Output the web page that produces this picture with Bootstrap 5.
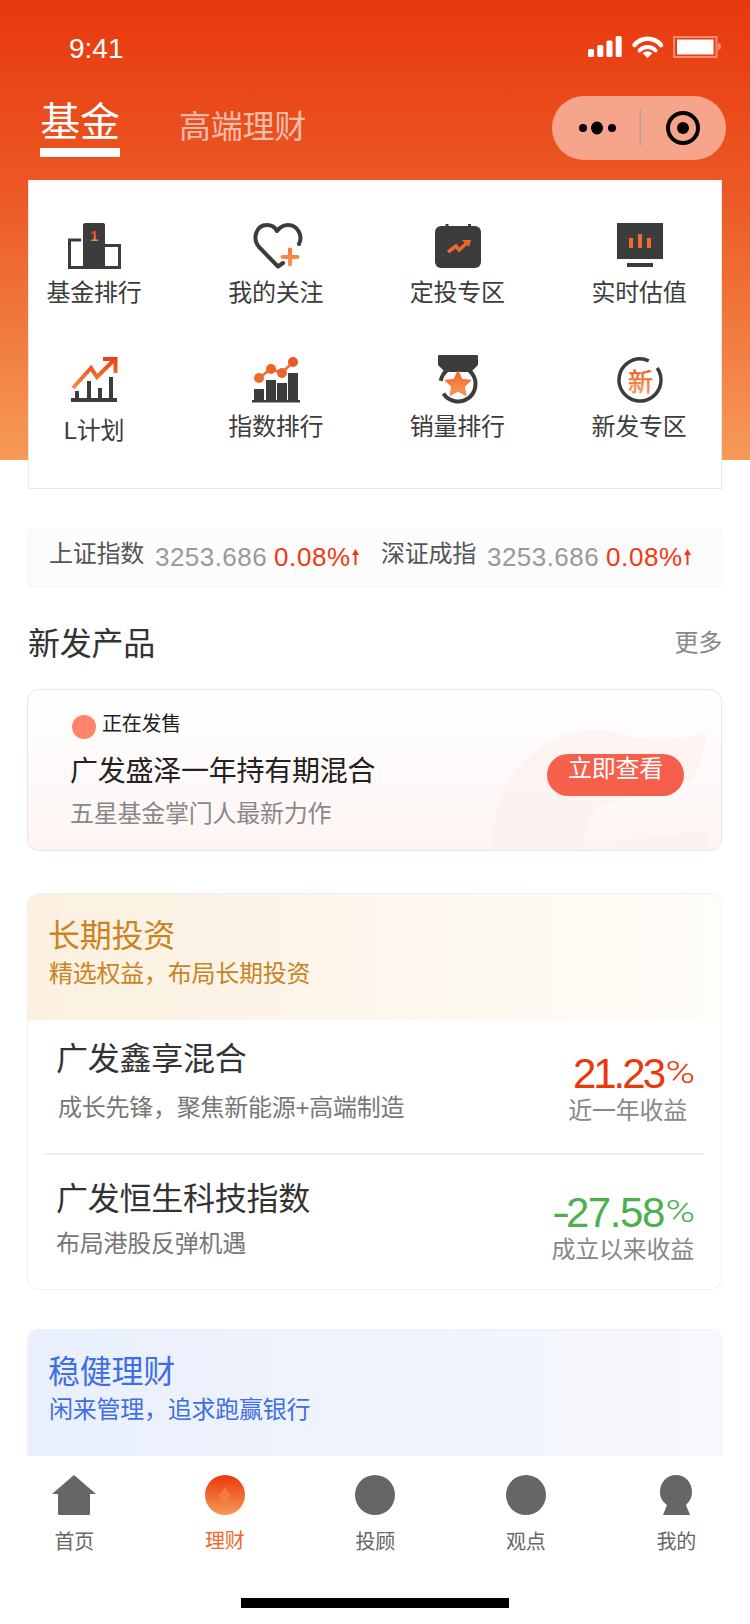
<!DOCTYPE html>
<html lang="zh-CN">
<head>
<meta charset="utf-8">
<title>基金</title>
<link rel="stylesheet" href="https://cdn.jsdelivr.net/npm/bootstrap@5.3.0/dist/css/bootstrap.min.css">
<style>
html,body{margin:0;background:#fff}
body{width:750px;height:1624px;overflow:hidden;font-family:"Liberation Sans","Noto Sans CJK SC",sans-serif;color:#333;letter-spacing:-.25px}
.zone-top{background:linear-gradient(180deg,#e8380d 0,#ec5a26 200px,#f69a58 460px) top/100% 460px no-repeat}
.status-row{height:96px;padding:33px 28px 0 69px;color:#fff}
.clock{font-size:28px;line-height:32px;font-family:"Liberation Sans",sans-serif;letter-spacing:0}
.nav-row{height:84px;padding:0 24px 0 40px}
.tab-on{width:80px;font-size:40px;line-height:52px;color:#fff;border-bottom:9px solid #fff;height:61px;text-align:center;white-space:nowrap}
.tab-off{font-size:32px;line-height:40px;color:rgba(255,255,255,.65);margin:11px 0 0 59px}
.capsule{width:174px;height:64px;border-radius:32px;background:#f6a58b}
.tool-box{width:694px;height:309px;margin:0 0 0 28px;background:#fff;border:1px solid #e9e9e9;border-top:0;padding:40px 16px 0 0}
.tool-item{width:132px;margin-left:-1px;text-align:center;font-size:24px;line-height:34px;color:#3c3c3c;white-space:nowrap}
.tool-item svg{display:block;margin:0 auto}
.tool-line+.tool-line{margin-top:40px}
.lift{margin-top:-4px}
.drop{margin-top:4px}
.index-bar{width:694px;height:58px;margin:40px 0 0 28px;background:#fcfcfc;border:1px solid #f5f5f5;padding-left:20px;white-space:nowrap}
.index-unit{width:332px;flex:none}
.index-name{font-size:24px;line-height:44px;color:#555;width:96px;margin-top:2px}
.index-num{font-size:26px;line-height:44px;color:#999;margin:5px 0 0 10px;letter-spacing:.45px}
.index-pct{font-size:26px;line-height:44px;color:#ee3a12;margin:5px 0 0 7px;letter-spacing:.6px}
.index-arrow{margin:19px 0 0 1px;display:block}
.sect-head{margin:36px 28px 0;height:42px}
.sect-name{font-size:32px;line-height:42px;color:#333}
.sect-more{font-size:24px;line-height:40px;color:#888}
.sale-box{position:relative;overflow:hidden;width:695px;height:162px;margin:24px 0 0 27px;border:1px solid #e6e6e6;border-radius:12px;background:linear-gradient(180deg,#fff,#fdf5f3);padding:22px 37px 0 42px}
.leaf-mark{position:absolute;left:452px;top:10px}
.sale-flag{font-size:20px;line-height:24px;color:#222}
.sale-dot{width:24px;height:24px;border-radius:50%;background:#ff8469;margin:3px 6px 0 2px}
.sale-name{font-size:28px;line-height:40px;margin-top:13px;color:#222}
.sale-note{font-size:24px;line-height:36px;margin-top:4px;color:#888}
.sale-btn{position:relative;width:137px;height:42px;margin-top:42px;border-radius:21px;background:#f55f4c;color:#fff;font-size:24px;line-height:30px;text-align:center}
.group-box{width:695px;margin-left:27px;border:1px solid #f0f0f0;border-radius:12px;overflow:hidden}
.long-box{height:397px;margin-top:42px}
.group-head{height:127px;padding:20px 20px 0 20px}
.long-box .group-head{height:126px}
.head-gold{background:linear-gradient(90deg,#fbf0e0,#fffdf9);color:#c9841f}
.head-blue{background:linear-gradient(90deg,#e9effd,#f7f8fc);color:#3f6fe3}
.group-title{font-size:32px;line-height:44px}
.group-sub{font-size:24px;line-height:32px;margin-left:1px}
.fund-row{height:133px;margin:0 17px;padding:0 9px 0 11px}
.fund-row+.fund-row{border-top:2px solid #eee;height:134px}
.fund-name{font-size:32px;line-height:44px;color:#333;margin-top:17px}
.fund-note{font-size:24px;line-height:36px;color:#777;margin-top:9px}
.note-in{margin-left:2px}
.fund-row+.fund-row .fund-name{margin-top:22px}
.fund-row+.fund-row .fund-note{margin-top:5px}
.fund-val{font-size:42px;line-height:44px;letter-spacing:-3px;font-family:"Liberation Sans",sans-serif;margin-top:32px;white-space:nowrap}
.fund-row+.fund-row .fund-val{margin-top:36px;letter-spacing:-1.4px}
.fund-unit{display:inline-block;width:28px;margin-left:4px;text-align:right;font-family:Roboto,"Liberation Sans",sans-serif;font-weight:300;font-size:32px;letter-spacing:0;transform:translateY(-5px) scaleX(1.25);transform-origin:100% 50%}
.fund-row+.fund-row .fund-unit{letter-spacing:0;margin-left:3px}
.minus-box{display:inline-block;width:20px;letter-spacing:0}
.fund-row+.fund-row .minus-box{letter-spacing:0}
.minus-sign{display:inline-block;transform:scaleX(1.3);transform-origin:0 50%}
.fund-cap{font-size:24px;line-height:34px;color:#888;margin-top:-5px;white-space:nowrap}
.cap-in{margin-right:8px}
.cap-edge{margin-right:1px}
.tone-up{color:#e8380d}
.tone-down{color:#4caf50}
.blue-box{height:127px;margin-top:39px;border-bottom:0;border-radius:12px 12px 0 0}
.tab-bar{height:168px;background:#fff;padding-top:19px}
.tab-line{margin-left:-1px}
.tab-cell{text-align:center;font-size:20px;line-height:28px;color:#666;width:150.5px;flex:none;text-indent:-2px}
.tab-cell svg{display:block;margin:0 auto 13px}
.tab-live{color:#f0682c}
.tab-live .tab-word{position:relative;top:-1px}
.home-line{width:268px;height:10px;background:#000;margin:42px auto 0}
</style>
</head>
<body>
<svg width="0" height="0" class="position-absolute">
<defs>
<linearGradient id="ember" x1="0" y1="0" x2="0" y2="1"><stop offset="0" stop-color="#e8380d"/><stop offset="1" stop-color="#f79a56"/></linearGradient>
<linearGradient id="emberFlat" gradientUnits="userSpaceOnUse" x1="0" y1="8" x2="0" y2="40"><stop offset="0" stop-color="#e8400f"/><stop offset="1" stop-color="#f78f4e"/></linearGradient>
<linearGradient id="emberOne" gradientUnits="userSpaceOnUse" x1="0" y1="10" x2="0" y2="22"><stop offset="0" stop-color="#e8400f"/><stop offset="1" stop-color="#f78f4e"/></linearGradient>
</defs>
</svg>

<div class="zone-top">
  <div class="status-row d-flex justify-content-between">
    <div class="clock">9:41</div>
    <svg width="135" height="27" viewBox="587 33 135 27">
      <g fill="#fff">
        <rect x="588" y="49" width="6" height="8" rx="1.500"/><rect x="597.300" y="45" width="6" height="12" rx="1.500"/><rect x="606.500" y="40.500" width="6" height="16.500" rx="1.500"/><rect x="615.700" y="36" width="6" height="21" rx="1.500"/>
        <path d="M647.500 58 642.500 53Q647.500 49.500 652.500 53Z"/>
      </g>
      <path d="M634.500 45A17 17 0 0 1 661 45" fill="none" stroke="#fff" stroke-width="4.500" stroke-linecap="round"/>
      <path d="M639.500 50.500A11 11 0 0 1 655.500 50.500" fill="none" stroke="#fff" stroke-width="4" stroke-linecap="round"/>
      <rect x="674" y="37" width="42.500" height="20" fill="none" stroke="#fff" stroke-opacity=".4" stroke-width="2"/>
      <rect x="677" y="39.500" width="36.500" height="15" fill="#fff"/>
      <path d="M718 43a3 3.500 0 0 1 0 7Z" fill="#fff" fill-opacity=".4"/>
    </svg>
  </div>

  <div class="nav-row d-flex align-items-start">
    <div class="tab-on">基金</div>
    <div class="tab-off">高端理财</div>
    <div class="capsule ms-auto">
      <svg width="174" height="64" viewBox="0 0 174 64">
        <circle cx="31" cy="32" r="4"/><ellipse cx="45" cy="32" rx="6" ry="6.500"/><circle cx="60" cy="32" r="4"/>
        <rect x="87.500" y="13" width="1.500" height="37" fill="#b3a197"/>
        <circle cx="131" cy="32" r="15" fill="none" stroke="#000" stroke-width="4"/><circle cx="131" cy="32" r="6"/>
      </svg>
    </div>
  </div>

  <div class="tool-box">
    <div class="tool-line d-flex justify-content-between">
      <div class="tool-item">
        <svg width="60" height="60" viewBox="0 0 60 60">
          <path d="M19 5a2 2 0 0 1 2-2h18a2 2 0 0 1 2 2v44H19Z" fill="#3c3c3c"/>
          <path d="M17 20H5.500V47.500H19M41 25.500H55.500V47.500H41" fill="none" stroke="#3c3c3c" stroke-width="3"/>
          <text x="30" y="21" text-anchor="middle" font-size="14" font-weight="700" fill="url(#emberOne)" font-family="Liberation Sans">1</text>
        </svg>
        <div class="lift">基金排行</div>
      </div>
      <div class="tool-item">
        <svg width="60" height="60" viewBox="-1 0 60 60">
          <path d="M36 43 31 46.500 12 27C5 19 9 5 20 5c5 0 8 2 10 6 3-4 6-6 11-6 10 0 15 11 11 19" fill="none" stroke="#3c3c3c" stroke-width="4" stroke-linecap="round" stroke-linejoin="round"/>
          <path d="M43 29.500V44.500M35.500 37H50.500" stroke="url(#emberFlat)" stroke-width="4" stroke-linecap="round"/>
        </svg>
        <div class="lift">我的关注</div>
      </div>
      <div class="tool-item">
        <svg width="60" height="60" viewBox="0 0 60 60">
          <rect x="8" y="6" width="46" height="42" rx="6" fill="#3c3c3c"/>
          <rect x="18.500" y="4" width="3" height="5" fill="#3c3c3c"/><rect x="41" y="4" width="3" height="5" fill="#3c3c3c"/>
          <path d="M21 32 29 26 32 30 41 22" fill="none" stroke="#f0672b" stroke-width="3.500"/>
          <path d="M35 20H44L42 27Z" fill="#f0672b"/>
        </svg>
        <div class="lift">定投专区</div>
      </div>
      <div class="tool-item">
        <svg width="60" height="60" viewBox="-1 0 60 60">
          <rect x="7" y="3" width="46" height="36" fill="#3c3c3c"/>
          <rect x="17" y="43" width="26" height="4" fill="#3c3c3c"/>
          <rect x="19" y="18" width="4" height="10" fill="#ee6a2e"/><rect x="28" y="14" width="4" height="14" fill="#ee6a2e"/><rect x="37" y="18" width="4" height="10" fill="#ee6a2e"/>
        </svg>
        <div class="lift">实时估值</div>
      </div>
    </div>
    <div class="tool-line d-flex justify-content-between">
      <div class="tool-item">
        <svg width="60" height="60" viewBox="0 0 60 60">
          <rect x="7" y="48" width="46" height="4" fill="#3c3c3c"/>
          <rect x="11" y="41" width="4" height="8" fill="#3c3c3c"/><rect x="23" y="31" width="4" height="18" fill="#3c3c3c"/><rect x="34" y="38" width="4" height="11" fill="#3c3c3c"/><rect x="45" y="27" width="4" height="22" fill="#3c3c3c"/>
          <path d="M9 38 27 18 33 27 50 10M39 9H51.500V23" fill="none" stroke="url(#emberFlat)" stroke-width="4"/>
        </svg>
        <div class="drop">L计划</div>
      </div>
      <div class="tool-item">
        <svg width="60" height="60" viewBox="0 0 60 60">
          <rect x="6" y="50" width="48" height="2.500" fill="#3c3c3c"/>
          <rect x="8" y="39" width="10" height="12" fill="#3c3c3c"/><rect x="20" y="30" width="10" height="21" fill="#3c3c3c"/><rect x="31" y="33" width="10" height="18" fill="#3c3c3c"/><rect x="42" y="23" width="10" height="28" fill="#3c3c3c"/>
          <path d="M13 28 25 19 36 23 47 12" fill="none" stroke="#ef6a2c" stroke-width="2.500"/>
          <circle cx="13" cy="28" r="5" fill="#f0682c"/><circle cx="25" cy="19" r="5" fill="#ef622a"/><circle cx="36" cy="23" r="5" fill="#ef622a"/><circle cx="47" cy="12" r="5" fill="#ec5620"/>
        </svg>
        <div>指数排行</div>
      </div>
      <div class="tool-item">
        <svg width="60" height="60" viewBox="0 0 60 60">
          <path d="M11 6a1 1 0 0 1 1-1H50a1 1 0 0 1 1 1V15L44 22H18L11 15Z" fill="#3c3c3c"/>
          <circle cx="31" cy="34" r="17.500" fill="none" stroke="#3c3c3c" stroke-width="4" stroke-dasharray="96 14" transform="rotate(190 31 34)"/>
          <path d="M31 21.500 34.800 29.500 43.500 30.500 37 36.500 38.800 45 31 40.800 23.200 45 25 36.500 18.500 30.500 27.200 29.500Z" fill="url(#emberFlat)" stroke="url(#emberFlat)" stroke-width="1.500" stroke-linejoin="round"/>
        </svg>
        <div>销量排行</div>
      </div>
      <div class="tool-item">
        <svg width="60" height="60" viewBox="-1 0 60 60">
          <circle cx="30" cy="30" r="21" fill="none" stroke="#3c3c3c" stroke-width="3.500" stroke-dasharray="120 12" transform="rotate(-35 30 30)"/>
          <text x="30.500" y="40.500" text-anchor="middle" font-size="25" font-weight="400" fill="url(#emberFlat)" stroke="url(#emberFlat)" stroke-width=".5" font-family="Noto Sans CJK SC">新</text>
        </svg>
        <div>新发专区</div>
      </div>
    </div>
  </div>
</div>

<div class="index-bar d-flex">
  <div class="index-unit d-flex">
    <div class="index-name">上证指数</div><div class="index-num">3253.686</div><div class="index-pct">0.08%</div>
    <svg class="index-arrow" width="7" height="16" viewBox="0 0 7 16"><path d="M3.500 0 7 6H4.500V16H2.500V6H0Z" fill="#ee3a12"/></svg>
  </div>
  <div class="index-unit d-flex">
    <div class="index-name">深证成指</div><div class="index-num">3253.686</div><div class="index-pct">0.08%</div>
    <svg class="index-arrow" width="7" height="16" viewBox="0 0 7 16"><path d="M3.500 0 7 6H4.500V16H2.500V6H0Z" fill="#ee3a12"/></svg>
  </div>
</div>

<div class="sect-head d-flex justify-content-between">
  <div class="sect-name">新发产品</div>
  <div class="sect-more">更多</div>
</div>

<div class="sale-box d-flex justify-content-between">
  <svg class="leaf-mark" width="250" height="150" viewBox="480 700 250 150">
    <path d="M492 850C492 780 535 730 597 730 615 730 625 736 637 738 670 740 695 738 707 732 703 755 700 765 693 780 660 788 630 796 597 807 588 820 583 835 580 850ZM580 850C620 840 665 835 707 832V850Z" fill="#fcefeb" fill-opacity=".55"/>
  </svg>
  <div class="position-relative">
    <div class="sale-flag d-flex"><span class="sale-dot"></span>正在发售</div>
    <div class="sale-name">广发盛泽一年持有期混合</div>
    <div class="sale-note">五星基金掌门人最新力作</div>
  </div>
  <div class="sale-btn">立即查看</div>
</div>

<div class="group-box long-box bg-white">
  <div class="group-head head-gold">
    <div class="group-title">长期投资</div>
    <div class="group-sub">精选权益，布局长期投资</div>
  </div>
  <div class="fund-row d-flex justify-content-between">
    <div>
      <div class="fund-name">广发鑫享混合</div>
      <div class="fund-note note-in">成长先锋，聚焦新能源+高端制造</div>
    </div>
    <div class="text-end">
      <div class="fund-val tone-up">21.23<span class="fund-unit">%</span></div>
      <div class="fund-cap cap-in">近一年收益</div>
    </div>
  </div>
  <div class="fund-row d-flex justify-content-between">
    <div>
      <div class="fund-name">广发恒生科技指数</div>
      <div class="fund-note">布局港股反弹机遇</div>
    </div>
    <div class="text-end">
      <div class="fund-val tone-down"><span class="minus-box"><span class="minus-sign">-</span></span>27.58<span class="fund-unit">%</span></div>
      <div class="fund-cap cap-edge">成立以来收益</div>
    </div>
  </div>
</div>

<div class="group-box blue-box">
  <div class="group-head head-blue">
    <div class="group-title">稳健理财</div>
    <div class="group-sub">闲来管理，追求跑赢银行</div>
  </div>
</div>

<div class="tab-bar">
  <div class="tab-line d-flex">
    <div class="tab-cell">
      <svg width="44" height="40" viewBox="0 0 44 40"><path d="M22 0 44 19H38V38.500a1.500 1.500 0 0 1-1.500 1.500H7.500A1.500 1.500 0 0 1 6 38.500V19H0Z" fill="#666"/></svg>
      首页
    </div>
    <div class="tab-cell tab-live">
      <svg width="40" height="40" viewBox="0 0 40 40"><circle cx="20" cy="20" r="20" fill="url(#ember)"/><path d="M20 12 26 20.500 20 29 14 20.500Z" fill="#f5824a" fill-opacity=".75"/></svg>
      <span class="tab-word">理财</span>
    </div>
    <div class="tab-cell">
      <svg width="40" height="40" viewBox="0 0 40 40"><circle cx="20" cy="20" r="20" fill="#666"/></svg>
      投顾
    </div>
    <div class="tab-cell">
      <svg width="40" height="40" viewBox="0 0 40 40"><circle cx="20" cy="20" r="20" fill="#666"/></svg>
      观点
    </div>
    <div class="tab-cell">
      <svg width="40" height="40" viewBox="0 0 40 40"><path d="M20 0C29 0 36 7 36 17 36 23 33 27 30 30L34 40H7L11 30C7 27 4 23 4 17 4 7 11 0 20 0Z" fill="#666"/></svg>
      我的
    </div>
  </div>
  <div class="home-line"></div>
</div>
<script src="https://cdn.jsdelivr.net/npm/bootstrap@5.3.0/dist/js/bootstrap.bundle.min.js"></script>
</body>
</html>
